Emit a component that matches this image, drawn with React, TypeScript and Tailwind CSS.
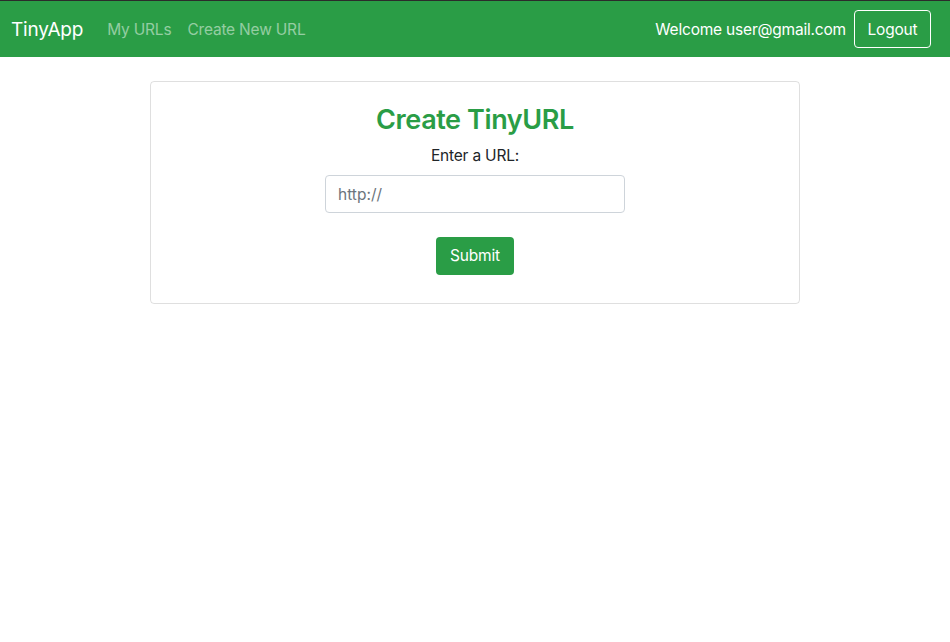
export default function App() {
  return (
    <div className="min-h-[642px] bg-white font-['Inter','Liberation_Sans',Arial,sans-serif] text-[#212529]">
      {/* Navbar */}
      <nav className="flex h-[57px] items-center justify-between border-t border-[#2b2b2b] bg-[#2a9d46] pl-[11px] pr-[19px]">
        <div className="mt-[2px] flex items-center">
          <a className="mr-4 text-[19px] leading-[30px] tracking-[-0.2px] text-white">TinyApp</a>
          <ul className="flex text-[15.5px] tracking-[-0.2px] text-white/50">
            <li className="px-2 py-2">My URLs</li>
            <li className="px-2 py-2">Create New URL</li>
          </ul>
        </div>
        <div className="flex items-center gap-2">
          <span className="mt-[2px] text-[15.5px] tracking-[-0.2px] text-white">Welcome user@gmail.com</span>
          <button className="h-[38px] w-[77px] rounded border border-white pt-[1px] text-[15.5px] tracking-[-0.2px] text-white">
            Logout
          </button>
        </div>
      </nav>

      {/* Card */}
      <div className="mx-auto mt-6 w-[650px] rounded border border-black/[0.125] px-5 pb-[28px] pt-[22px] text-center">
        <h3 className="mb-2 text-[27px] font-semibold leading-[32px] tracking-[-0.4px] text-[#2a9d46]">Create TinyURL</h3>
        <label className="mb-[7px] block text-[15.5px] leading-6 tracking-[-0.2px]">Enter a URL:</label>
        <input
          type="text"
          placeholder="http://"
          className="mx-auto block h-[38px] w-[300px] rounded border border-[#ced4da] px-3 text-[15.5px] text-[#495057] placeholder:text-[#6c757d]"
        />
        <button className="mt-6 h-[38px] w-[78px] rounded bg-[#2a9d46] text-[15.5px] tracking-[-0.2px] text-white">
          Submit
        </button>
      </div>
    </div>
  );
}
